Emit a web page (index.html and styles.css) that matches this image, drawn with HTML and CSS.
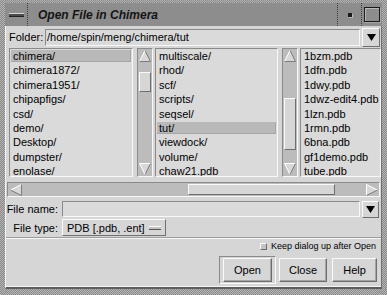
FILE: index.html
```html
<!doctype html>
<html>
<head>
<meta charset="UTF-8">
<link rel="stylesheet" href="styles.css">
</head>
<body>
<div class="window">
  <div class="titlebar">
    <div class="tb-menu"><span class="tb-dash"></span></div>
    <div class="tb-title">Open File in Chimera</div>
    <div class="tb-iconify"><span class="tb-dot"></span></div>
    <div class="tb-maximize"><span class="tb-box"></span></div>
  </div>

  <div class="dialog">
    <div class="folder-row">
      <span class="folder-label">Folder:</span>
      <div class="field folder-field">/home/spin/meng/chimera/tut</div>
      <div class="raised drop-btn">
        <svg width="9" height="7" viewBox="0 0 9 7"><polygon points="0,0 9,0 4.5,7" fill="#000"/></svg>
      </div>
    </div>

    <div class="browser">
      <div class="listbox col1">
        <div class="item sel">chimera/</div>
        <div class="item">chimera1872/</div>
        <div class="item">chimera1951/</div>
        <div class="item">chipapfigs/</div>
        <div class="item">csd/</div>
        <div class="item">demo/</div>
        <div class="item">Desktop/</div>
        <div class="item">dumpster/</div>
        <div class="item">enolase/</div>
      </div>
      <div class="vscroll sb1">
        <div class="sb-arrow">
          <svg width="12" height="12" viewBox="0 0 12 12"><polygon points="6,0.5 11.5,11.5 0.5,11.5" fill="#d8d8d8"/><line x1="6" y1="0.5" x2="0.5" y2="11.5" stroke="#fff"/><line x1="6" y1="0.5" x2="11.5" y2="11.5" stroke="#7c7c7c"/><line x1="0.5" y1="11.5" x2="11.5" y2="11.5" stroke="#7c7c7c"/></svg>
        </div>
        <div class="sb-track"><div class="raised thumb"></div></div>
        <div class="sb-arrow">
          <svg width="12" height="12" viewBox="0 0 12 12"><polygon points="0.5,0.5 11.5,0.5 6,11.5" fill="#d8d8d8"/><line x1="0.5" y1="0.5" x2="11.5" y2="0.5" stroke="#fff"/><line x1="0.5" y1="0.5" x2="6" y2="11.5" stroke="#fff"/><line x1="11.5" y1="0.5" x2="6" y2="11.5" stroke="#7c7c7c"/></svg>
        </div>
      </div>
      <div class="listbox col2">
        <div class="item">multiscale/</div>
        <div class="item">rhod/</div>
        <div class="item">scf/</div>
        <div class="item">scripts/</div>
        <div class="item">seqsel/</div>
        <div class="item sel">tut/</div>
        <div class="item">viewdock/</div>
        <div class="item">volume/</div>
        <div class="item">chaw21.pdb</div>
      </div>
      <div class="vscroll sb2">
        <div class="sb-arrow">
          <svg width="12" height="12" viewBox="0 0 12 12"><polygon points="6,0.5 11.5,11.5 0.5,11.5" fill="#d8d8d8"/><line x1="6" y1="0.5" x2="0.5" y2="11.5" stroke="#fff"/><line x1="6" y1="0.5" x2="11.5" y2="11.5" stroke="#7c7c7c"/><line x1="0.5" y1="11.5" x2="11.5" y2="11.5" stroke="#7c7c7c"/></svg>
        </div>
        <div class="sb-track"><div class="raised thumb"></div></div>
        <div class="sb-arrow">
          <svg width="12" height="12" viewBox="0 0 12 12"><polygon points="0.5,0.5 11.5,0.5 6,11.5" fill="#d8d8d8"/><line x1="0.5" y1="0.5" x2="11.5" y2="0.5" stroke="#fff"/><line x1="0.5" y1="0.5" x2="6" y2="11.5" stroke="#fff"/><line x1="11.5" y1="0.5" x2="6" y2="11.5" stroke="#7c7c7c"/></svg>
        </div>
      </div>
      <div class="listbox col3">
        <div class="item">1bzm.pdb</div>
        <div class="item">1dfn.pdb</div>
        <div class="item">1dwy.pdb</div>
        <div class="item">1dwz-edit4.pdb</div>
        <div class="item">1lzn.pdb</div>
        <div class="item">1rmn.pdb</div>
        <div class="item">6bna.pdb</div>
        <div class="item">gf1demo.pdb</div>
        <div class="item">tube.pdb</div>
      </div>
    </div>

    <div class="hscroll">
      <div class="hs-arrow">
        <svg width="12" height="12" viewBox="0 0 12 12"><polygon points="0.5,6 11.5,0.5 11.5,11.5" fill="#d8d8d8"/><line x1="0.5" y1="6" x2="11.5" y2="0.5" stroke="#fff"/><line x1="0.5" y1="6" x2="11.5" y2="11.5" stroke="#7c7c7c"/><line x1="11.5" y1="0.5" x2="11.5" y2="11.5" stroke="#7c7c7c"/></svg>
      </div>
      <div class="hs-track"><div class="raised hthumb"></div></div>
      <div class="hs-arrow">
        <svg width="12" height="12" viewBox="0 0 12 12"><polygon points="0.5,0.5 11.5,6 0.5,11.5" fill="#d8d8d8"/><line x1="0.5" y1="0.5" x2="11.5" y2="6" stroke="#fff"/><line x1="0.5" y1="0.5" x2="0.5" y2="11.5" stroke="#fff"/><line x1="0.5" y1="11.5" x2="11.5" y2="6" stroke="#7c7c7c"/></svg>
      </div>
    </div>

    <div class="form-row name-row">
      <span class="form-label">File name:</span>
      <div class="field name-field"></div>
      <div class="raised drop-btn">
        <svg width="9" height="7" viewBox="0 0 9 7"><polygon points="0,0 9,0 4.5,7" fill="#000"/></svg>
      </div>
    </div>

    <div class="form-row type-row">
      <span class="form-label">File type:</span>
      <div class="raised option">
        <span>PDB [.pdb, .ent]</span>
        <span class="option-mark"></span>
      </div>
    </div>

    <div class="separator"></div>

    <div class="keep-row">
      <span class="raised check"></span>
      <span>Keep dialog up after Open</span>
    </div>

    <div class="buttons">
      <div class="default-ring"><div class="raised btn open">Open</div></div>
      <div class="raised btn close">Close</div>
      <div class="raised btn help">Help</div>
    </div>
  </div>
</div>
</body>
</html>
```

FILE: styles.css
```css
* {
  box-sizing: border-box;
}

body {
  margin: 0;
  font-family: "Liberation Sans", Arial, sans-serif;
  font-size: 11px;
  color: #000;
}

.window {
  width: 387px;
  height: 295px;
  padding: 3px 5px 6px 5px;
  background: repeating-conic-gradient(#8a8a8a 0 25%, #b4b4b4 0 50%) 0 0 / 2px 2px;
  display: flex;
  flex-direction: column;
}

/* title bar */
.titlebar {
  height: 23px;
  display: flex;
  background: #8d8d8d;
}

.tb-menu {
  width: 23px;
  border-right: 1px dotted #3a3a3a;
  display: flex;
  align-items: center;
  justify-content: center;
}

.tb-dash {
  width: 15px;
  height: 4px;
  background: #4a4a4a;
  border-top: 1px solid #d8d8d8;
  border-bottom: 1px solid #222;
}

.tb-title {
  flex: 1;
  padding-left: 10px;
  display: flex;
  align-items: center;
  font-size: 12px;
  font-weight: bold;
  font-style: italic;
  color: #141414;
}

.tb-iconify {
  width: 25px;
  border-left: 1px dotted #3a3a3a;
  border-right: 1px dotted #3a3a3a;
  display: flex;
  align-items: center;
  justify-content: center;
}

.tb-dot {
  width: 4px;
  height: 4px;
  background: #1a1a1a;
  box-shadow: 1px 1px #b8b8b8;
}

.tb-maximize {
  width: 20px;
  display: flex;
  align-items: center;
  justify-content: center;
}

.tb-box {
  width: 16px;
  height: 15px;
  border: 1px solid #1a1a1a;
  box-shadow: inset 1px 1px #b8b8b8, 1px 1px #a8a8a8;
}

/* dialog body */
.dialog {
  flex: 1;
  background: #d6d6d6;
  border-left: 1px solid #f4f4f4;
  border-right: 1px solid #707070;
  border-bottom: 2px solid #5c5c5c;
  box-shadow: inset 0 -1px #f4f4f4;
  display: flex;
  flex-direction: column;
}

.raised {
  background: #d6d6d6;
  border: 1px solid;
  border-color: #fafafa #6e6e6e #6e6e6e #fafafa;
}

.field {
  background: #dadada;
  border: 1px solid;
  border-color: #8a8a8a #f8f8f8 #f8f8f8 #8a8a8a;
  padding-left: 1px;
  white-space: nowrap;
}

.drop-btn {
  margin-left: 2px;
  display: flex;
  align-items: center;
  justify-content: center;
}

.folder-row {
  display: flex;
  align-items: center;
  height: 20px;
  margin-top: 1px;
  padding-left: 3px;
}

.folder-label {
  width: 36px;
}

.folder-field {
  width: 315px;
  height: 17px;
  line-height: 15px;
}

.folder-row .drop-btn {
  width: 18px;
  height: 19px;
}

/* file browser columns */
.browser {
  display: flex;
  height: 129px;
  margin-top: 1px;
  padding-left: 3px;
}

.listbox {
  background: #dadada;
  border: 1px solid;
  border-color: #8a8a8a #f8f8f8 #f8f8f8 #8a8a8a;
  overflow: hidden;
}

.col1 {
  width: 124px;
}

.col2 {
  width: 123px;
  margin-left: 2px;
}

.col3 {
  width: 81px;
  margin-left: 2px;
}

.item {
  height: 14.4px;
  line-height: 14.4px;
  padding-left: 3px;
  white-space: nowrap;
}

.item.sel {
  background: #b9b9b9;
  box-shadow: inset 0 0 0 1px #dadada, inset -2px -2px #a6a6a6;
}

.vscroll {
  width: 16px;
  margin-left: 4px;
  background: #bcbcbc;
  border: 1px solid;
  border-color: #8a8a8a #f8f8f8 #f8f8f8 #8a8a8a;
  display: flex;
  flex-direction: column;
}

.sb-arrow {
  height: 14px;
  display: flex;
  align-items: center;
  justify-content: center;
}

.sb-track {
  flex: 1;
}

.thumb {
  width: 12px;
  margin-left: 1px;
}

.sb1 .thumb {
  margin-top: 9px;
  height: 20px;
}

.sb2 .thumb {
  margin-top: 35px;
  height: 52px;
}

.hscroll {
  display: flex;
  height: 15px;
  margin: 5px 1px 0 1px;
  background: #bcbcbc;
  border: 1px solid;
  border-color: #8a8a8a #f8f8f8 #f8f8f8 #8a8a8a;
}

.hs-arrow {
  width: 15px;
  display: flex;
  align-items: center;
  justify-content: center;
}

.hs-track {
  flex: 1;
  display: flex;
  align-items: center;
}

.hthumb {
  width: 147px;
  height: 11px;
  margin-left: 165px;
}

/* name / type rows */
.form-row {
  display: flex;
  align-items: center;
}

.name-row {
  height: 18px;
  margin-top: 3px;
}

.type-row {
  height: 17px;
  margin-top: 1px;
}

.form-label {
  width: 56px;
  padding-right: 4px;
  text-align: right;
}

.name-field {
  width: 298px;
  height: 16px;
}

.name-row .drop-btn {
  width: 17px;
  height: 17px;
}

.option {
  width: 104px;
  height: 17px;
  padding-left: 4px;
  display: flex;
  align-items: center;
}

.option-mark {
  width: 12px;
  height: 4px;
  margin-left: auto;
  margin-right: 4px;
  background: #c4c4c4;
  border-top: 1px solid #fafafa;
  border-bottom: 1px solid #555;
}

.separator {
  height: 2px;
  margin-top: 1px;
  border-top: 1px solid #9c9c9c;
  border-bottom: 1px solid #f6f6f6;
}

.keep-row {
  display: flex;
  justify-content: flex-end;
  align-items: center;
  gap: 4px;
  height: 12px;
  margin-top: 1px;
  padding-right: 5px;
  font-size: 9px;
}

.check {
  width: 7px;
  height: 7px;
  background: #c4c4c4;
}

/* buttons */
.buttons {
  display: flex;
  justify-content: flex-end;
  align-items: center;
  height: 28px;
  margin-top: 4px;
  padding-right: 4px;
}

.default-ring {
  border: 1px solid;
  border-color: #8a8a8a #f8f8f8 #f8f8f8 #8a8a8a;
  padding: 1px 3px;
}

.btn {
  height: 24px;
  display: flex;
  align-items: center;
  justify-content: center;
  box-shadow: inset -1px -1px #a4a4a4;
}

.open {
  width: 49px;
}

.close {
  width: 48px;
  margin-left: 3px;
}

.help {
  width: 45px;
  margin-left: 5px;
}
```
